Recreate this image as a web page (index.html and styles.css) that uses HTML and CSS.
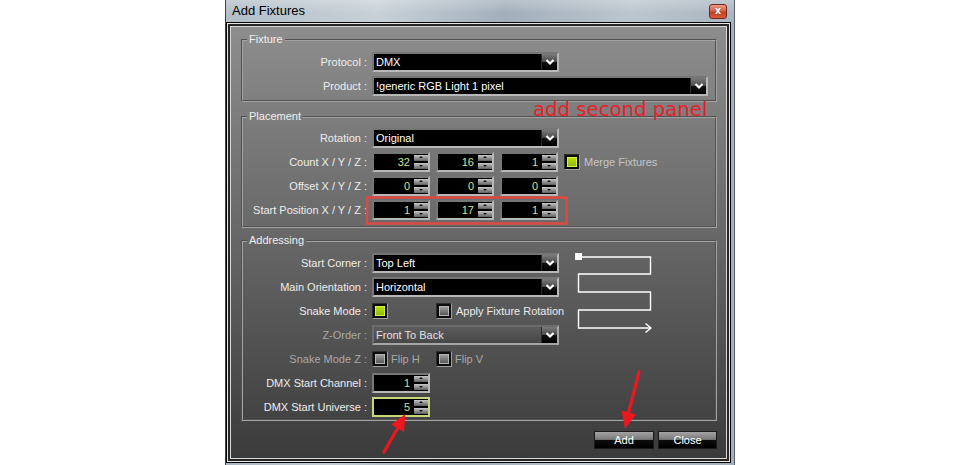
FILE: index.html
```html
<!DOCTYPE html>
<html lang="en">
<head>
<meta charset="utf-8">
<title>Add Fixtures</title>
<link rel="stylesheet" href="styles.css">
</head>
<body>
<div class="page">
  <div class="window">
    <div class="titlebar">
      <span class="title">Add Fixtures</span>
      <span class="close">x</span>
    </div>
    <div class="panel">
      <fieldset class="group g-fixture">
        <legend>Fixture</legend>
        <div class="row">
          <span class="lbl">Protocol :</span>
          <div class="field dd w-short"><span class="val">DMX</span><span class="ddbtn"><svg viewBox="0 0 16 16" width="16" height="16"><polyline points="4.5,6 8,9.5 11.5,6" /></svg></span></div>
        </div>
        <div class="row">
          <span class="lbl">Product :</span>
          <div class="field dd w-long"><span class="val">!generic RGB Light 1 pixel</span><span class="ddbtn"><svg viewBox="0 0 16 16" width="16" height="16"><polyline points="4.5,6 8,9.5 11.5,6" /></svg></span></div>
        </div>
      </fieldset>

      <fieldset class="group g-placement">
        <legend>Placement</legend>
        <div class="row">
          <span class="lbl">Rotation :</span>
          <div class="field dd w-short"><span class="val">Original</span><span class="ddbtn"><svg viewBox="0 0 16 16" width="16" height="16"><polyline points="4.5,6 8,9.5 11.5,6" /></svg></span></div>
        </div>
        <div class="row">
          <span class="lbl">Count X / Y / Z :</span>
          <div class="spins">
            <div class="field spin"><span class="num">32</span><span class="spinner"><i class="up"></i><i class="dn"></i></span></div>
            <div class="field spin"><span class="num">16</span><span class="spinner"><i class="up"></i><i class="dn"></i></span></div>
            <div class="field spin"><span class="num">1</span><span class="spinner"><i class="up"></i><i class="dn"></i></span></div>
          </div>
          <span class="cb on merge"><i></i></span><span class="opt-text dimtext">Merge Fixtures</span>
        </div>
        <div class="row">
          <span class="lbl">Offset X / Y / Z :</span>
          <div class="spins">
            <div class="field spin"><span class="num">0</span><span class="spinner"><i class="up"></i><i class="dn"></i></span></div>
            <div class="field spin"><span class="num">0</span><span class="spinner"><i class="up"></i><i class="dn"></i></span></div>
            <div class="field spin"><span class="num">0</span><span class="spinner"><i class="up"></i><i class="dn"></i></span></div>
          </div>
        </div>
        <div class="row">
          <span class="lbl">Start Position X / Y / Z :</span>
          <div class="spins">
            <div class="field spin"><span class="num">1</span><span class="spinner"><i class="up"></i><i class="dn"></i></span></div>
            <div class="field spin"><span class="num">17</span><span class="spinner"><i class="up"></i><i class="dn"></i></span></div>
            <div class="field spin"><span class="num">1</span><span class="spinner"><i class="up"></i><i class="dn"></i></span></div>
          </div>
        </div>
      </fieldset>

      <fieldset class="group g-addressing">
        <legend>Addressing</legend>
        <div class="addr">
          <div class="addr-rows">
            <div class="row">
              <span class="lbl">Start Corner :</span>
              <div class="field dd w-short"><span class="val">Top Left</span><span class="ddbtn"><svg viewBox="0 0 16 16" width="16" height="16"><polyline points="4.5,6 8,9.5 11.5,6" /></svg></span></div>
            </div>
            <div class="row">
              <span class="lbl">Main Orientation :</span>
              <div class="field dd w-short"><span class="val">Horizontal</span><span class="ddbtn"><svg viewBox="0 0 16 16" width="16" height="16"><polyline points="4.5,6 8,9.5 11.5,6" /></svg></span></div>
            </div>
            <div class="row">
              <span class="lbl">Snake Mode :</span>
              <div class="opt"><span class="cb on"><i></i></span></div>
              <span class="cb"><i></i></span><span class="opt-text">Apply Fixture Rotation</span>
            </div>
            <div class="row">
              <span class="lbl dim">Z-Order :</span>
              <div class="field dd w-short disabled"><span class="val">Front To Back</span><span class="ddbtn"><svg viewBox="0 0 16 16" width="16" height="16"><polyline points="4.5,6 8,9.5 11.5,6" /></svg></span></div>
            </div>
            <div class="row">
              <span class="lbl dim">Snake Mode Z :</span>
              <div class="opt"><span class="cb"><i></i></span><span class="opt-text dim">Flip H</span></div>
              <span class="cb"><i></i></span><span class="opt-text dim">Flip V</span>
            </div>
            <div class="row">
              <span class="lbl">DMX Start Channel :</span>
              <div class="field spin"><span class="num">1</span><span class="spinner"><i class="up"></i><i class="dn"></i></span></div>
            </div>
            <div class="row">
              <span class="lbl">DMX Start Universe :</span>
              <div class="field spin focus"><span class="num">5</span><span class="spinner"><i class="up"></i><i class="dn"></i></span></div>
            </div>
          </div>
          <svg class="snake" viewBox="0 0 80 82" width="80" height="82">
            <rect x="1" y="0" width="7" height="7" fill="#fff"/>
            <polyline points="8,4 76.5,4 76.5,21 4.5,21 4.5,39 76.5,39 76.5,57 4.5,57 4.5,75 77,75" />
            <polyline points="71.5,70.5 77,75 71.5,79.5" />
          </svg>
        </div>
      </fieldset>

      <div class="buttons">
        <button class="btn btn-add" type="button">Add</button>
        <button class="btn btn-close" type="button">Close</button>
      </div>
    </div>
  </div>

  <div class="note">add second panel</div>

  <svg class="marks" viewBox="0 0 960 465" width="960" height="465">
    <rect x="367" y="197.5" width="199.5" height="26" fill="none" stroke="#dd4a44" stroke-width="2.5"/>
    <line x1="639" y1="372" x2="628.5" y2="413" stroke="#ec1820" stroke-width="3.2" stroke-linecap="round"/>
    <polygon points="625,429 636,414.5 621.5,410.5" fill="#ec1820"/>
    <line x1="384" y1="452" x2="398" y2="427.5" stroke="#ec1820" stroke-width="3.2" stroke-linecap="round"/>
    <polygon points="405.5,414 404,432 391,424.5" fill="#ec1820"/>
  </svg>
</div>
</body>
</html>
```

FILE: styles.css
```css
* { box-sizing: border-box; }

html, body {
  margin: 0;
  padding: 0;
  background: #ffffff;
}

body {
  font-family: "Liberation Sans", Arial, sans-serif;
  font-size: 11px;
  color: #ececec;
}

.page {
  position: relative;
  width: 960px;
  height: 465px;
  overflow: hidden;
  display: flex;
}

/* ---------- window frame ---------- */
.window {
  margin-left: 225px;
  width: 510px;
  height: 465px;
  display: flex;
  flex-direction: column;
  border-left: 1px solid #3a444c;
  border-right: 1px solid #56616a;
  background: linear-gradient(90deg, #aab6c0 0%, #c3ccd3 20%, #9eabb6 45%, #b9c3cb 70%, #a3b0ba 100%);
}

.titlebar {
  height: 22px;
  flex: 0 0 22px;
  display: flex;
  align-items: flex-start;
  padding-left: 6px;
  background: linear-gradient(180deg, rgba(255,255,255,0.25), rgba(255,255,255,0) 60%),
              linear-gradient(90deg, #b3bec7 0%, #c8d1d8 30%, #a2afba 55%, #bcc6ce 80%, #a9b5bf 100%);
}

.title {
  font-family: "Liberation Sans", Arial, sans-serif;
  font-size: 13px;
  line-height: 22px;
  color: #000;
}

.close {
  margin-left: auto;
  margin-right: 7px;
  margin-top: 4px;
  width: 18px;
  height: 15px;
  border: 1px solid #6d2a1c;
  border-radius: 3px;
  background: linear-gradient(180deg, #eb9a86 0%, #d9634a 45%, #c2401f 55%, #d8593a 100%);
  color: #fff;
  font-family: "DejaVu Sans", sans-serif;
  font-weight: bold;
  font-size: 10px;
  line-height: 12px;
  text-align: center;
  text-shadow: 0 0 1px #5a1a0a;
}

/* ---------- panel ---------- */
.panel {
  flex: 1 1 auto;
  margin: 0 3px 2px 0;
  padding-top: 10px;
  border: 1px solid #050505;
  background: linear-gradient(180deg, #8e8e8e 0%, #7a7a7a 25%, #666 50%, #505050 75%, #3a3a3a 100%);
  box-shadow: inset 0 0 0 1px #e6e6e6, inset 0 0 0 3px #262626, inset 0 0 0 4px #d8d8d8;
}

/* ---------- group boxes ---------- */
.group {
  margin: 0 13px 0 14px;
  padding: 0;
  min-width: 0;
  border: 2px groove #a4a4a4;
}

.group legend {
  margin-left: 4px;
  padding: 0 2px;
  font-size: 11px;
  line-height: 13px;
  color: #f0f0f0;
}

.g-fixture { padding-top: 6px; padding-bottom: 4px; }
.g-placement { margin-top: 8px; padding-top: 5px; padding-bottom: 6px; }
.g-addressing { margin-top: 6px; padding-top: 6px; padding-bottom: 2px; }

.row {
  display: flex;
  align-items: center;
  height: 20px;
  margin-top: 4px;
  white-space: nowrap;
}
.row:first-of-type { margin-top: 0; }
.addr-rows .row:first-child { margin-top: 0; }

.lbl {
  flex: 0 0 124px;
  width: 124px;
  margin-right: 5px;
  text-align: right;
  color: #ededed;
  line-height: 20px;
}
.lbl.dim { color: #a9a9a9; }

/* ---------- fields ---------- */
.field {
  height: 20px;
  border: 2px solid;
  border-color: #767676 #b8b8b8 #b8b8b8 #767676;
  background: #000;
  display: flex;
  align-items: center;
}

.dd .val {
  flex: 1 1 auto;
  padding-left: 2px;
  color: #fff;
  line-height: 16px;
  overflow: hidden;
}

.w-short { width: 187px; }
.w-long { width: 336px; }

.ddbtn {
  flex: 0 0 16px;
  width: 16px;
  height: 16px;
  margin-right: 0;
  background: linear-gradient(180deg, #7a7a7a 0%, #4c4c4c 48%, #111 52%, #000 100%);
  border-left: 1px solid #2a2a2a;
}
.ddbtn svg { display: block; }
.ddbtn polyline {
  fill: none;
  stroke: #fff;
  stroke-width: 2.2;
}

.dd.disabled {
  background: linear-gradient(180deg, #5c5c5c, #474747);
  border-color: #6c6c6c #a6a6a6 #a6a6a6 #6c6c6c;
}
.dd.disabled .val { color: #e2e2e2; }

/* spin boxes */
.spins {
  display: flex;
  gap: 6px;
}

.spin { width: 58px; }

.spin .num {
  flex: 1 1 auto;
  text-align: right;
  padding-right: 4px;
  color: #cfe09a;
  line-height: 16px;
}

.spinner {
  flex: 0 0 14px;
  width: 14px;
  height: 16px;
  display: flex;
  flex-direction: column;
  justify-content: center;
  gap: 2px;
}
.spinner i {
  display: block;
  position: relative;
  height: 6px;
  background: linear-gradient(180deg, #c8c8c8 0%, #8e8e8e 55%, #5e5e5e 100%);
}
.spinner i::after {
  content: "";
  position: absolute;
  left: 5px;
  top: 1px;
  border-left: 2px solid transparent;
  border-right: 2px solid transparent;
}
.spinner i.up::after { border-bottom: 2px solid #101010; }
.spinner i.dn::after { border-top: 2px solid #101010; top: 2px; }

.spin.focus {
  border-color: #c6d67a;
}

/* ---------- checkboxes ---------- */
.cb {
  flex: 0 0 16px;
  width: 16px;
  height: 16px;
  padding: 2px;
  border: 1px solid;
  border-color: #2e2e2e #a0a0a0 #a0a0a0 #2e2e2e;
  background: #0c0c0c;
  display: block;
}
.cb i {
  display: block;
  width: 100%;
  height: 100%;
  border: 1px solid #b4b4b4;
  background: linear-gradient(180deg, #9c9c9c, #585858);
}
.cb.on i {
  border-color: #d6f24a;
  background: linear-gradient(180deg, #b8e000, #8fb800);
}

.merge { margin-left: 6px; }

.opt {
  flex: 0 0 64px;
  width: 64px;
  display: flex;
  align-items: center;
}

.opt-text {
  margin-left: 4px;
  color: #ececec;
}
.opt-text.dim { color: #a8a8a8; margin-left: 3px; }
.dimtext { color: #c6c6c6; }

/* ---------- addressing layout ---------- */
.addr {
  display: flex;
  align-items: flex-start;
}
.addr-rows {
  flex: 0 0 316px;
  width: 316px;
}
.snake {
  margin-left: 15px;
  display: block;
}
.snake polyline {
  fill: none;
  stroke: #fff;
  stroke-width: 1.4;
}

/* ---------- buttons ---------- */
.buttons {
  display: flex;
  justify-content: flex-end;
  gap: 4px;
  margin: 10px 13px 0 0;
}
.btn {
  height: 18px;
  padding: 0;
  border: 1px solid #1a1a1a;
  font-family: "Liberation Sans", Arial, sans-serif;
  font-size: 11px;
  color: #fff;
  line-height: 16px;
  background: linear-gradient(180deg, #a4a4a4 0%, #7a7a7a 45%, #5c5c5c 52%, #0c0c0c 53%, #000 100%);
}
.btn-add { width: 60px; }
.btn-close { width: 59px; }

/* ---------- annotations ---------- */
.note {
  position: absolute;
  left: 533px;
  top: 100px;
  font-family: "DejaVu Sans", sans-serif;
  font-size: 19.7px;
  line-height: 19px;
  color: #e8202a;
  white-space: nowrap;
}

.marks {
  position: absolute;
  left: 0;
  top: 0;
  pointer-events: none;
}
```
